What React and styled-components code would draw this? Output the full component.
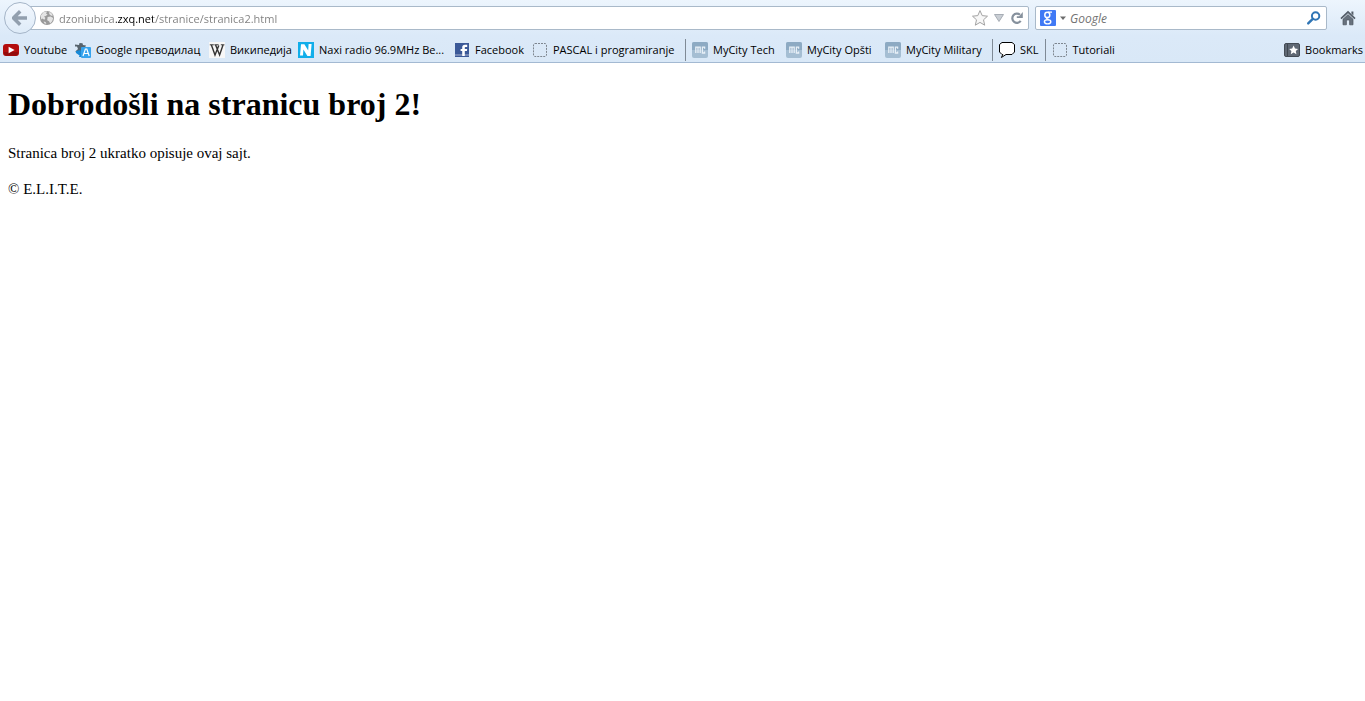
import React from "react";
import styled, { createGlobalStyle, css } from "styled-components";

const GlobalStyle = createGlobalStyle`
  *, *::before, *::after { box-sizing: border-box; }
  body { margin: 0; background: #fff; }
  button, input { font: inherit; }
`;

const uiFont = css`
  font-family: "Open Sans", "Noto Sans", sans-serif;
  font-size: 11px;
  line-height: 16px;
`;

const Chrome = styled.header`
  ${uiFont}
  color: #000;
  background: linear-gradient(#edf5fd 0, #dbe9f8 36px, #d9e8f7 100%);
  border-bottom: 1px solid #a3b9d2;
`;

const NavBar = styled.div`
  display: flex;
  align-items: center;
  height: 36px;
  padding: 0 9px 0 4px;
`;

const BackButton = styled.button`
  position: relative;
  z-index: 1;
  flex: none;
  display: grid;
  place-items: center;
  width: 32px;
  height: 32px;
  margin-right: -8px;
  padding: 0;
  border: 1px solid #a5b5c8;
  border-radius: 50%;
  background: linear-gradient(#f3f8fe, #deebf8);
`;

const Field = styled.form`
  display: flex;
  align-items: center;
  height: 24px;
  margin: 0;
  border: 1px solid #a9b9c9;
  border-radius: 2px;
  background: #fff;
`;

const AddressField = styled(Field)`
  flex: 1;
  min-width: 0;
  gap: 4px;
  padding: 0 3px 0 10px;
`;

const SearchField = styled(Field)`
  flex: none;
  width: 292px;
  margin: 0 13px 0 6px;
  padding: 0 4px;
`;

const TextInput = styled.input`
  flex: 1;
  min-width: 0;
  height: 20px;
  padding: 0;
  border: 0;
  outline: 0;
  background: transparent;
`;

const AddressInput = styled(TextInput)`
  color: transparent;
  caret-color: #000;
  background: linear-gradient(90deg, #7d7d7d 57px, #000 57px 94px, #7d7d7d 94px);
  -webkit-background-clip: text;
  background-clip: text;
`;

const SearchInput = styled(TextInput)`
  font-size: 12px;
  font-style: italic;
  &::placeholder { color: #737373; opacity: 1; }
`;

const IconButton = styled.button`
  flex: none;
  display: grid;
  place-items: center;
  width: ${(p) => p.$width || 16}px;
  height: 18px;
  padding: 0;
  border: 0;
  background: none;
`;

const BookmarksBar = styled.nav`
  display: flex;
  align-items: center;
  gap: 6px;
  height: 26px;
  padding: 2px 2px 0 3px;
`;

const Bookmark = styled.a`
  flex: none;
  display: flex;
  align-items: center;
  gap: 5px;
  min-width: ${(p) => p.$width}px;
  color: inherit;
  text-decoration: none;
  white-space: nowrap;
`;

const BookmarksMenu = styled.button`
  flex: none;
  display: flex;
  align-items: center;
  gap: 5px;
  margin-left: auto;
  padding: 0;
  border: 0;
  color: inherit;
  background: none;
`;

const Separator = styled.span`
  flex: none;
  width: 1px;
  height: 22px;
  background: #7f8a96;
`;

const Icon = styled.svg`
  flex: none;
  display: block;
  width: ${(p) => p.$size || 16}px;
  height: ${(p) => p.$size || 16}px;
`;

const Page = styled.main`
  padding: 0 8px;
  font-family: "Liberation Serif", "Times New Roman", serif;
  font-size: 15px;
  line-height: 20px;
  color: #000;
`;

const Title = styled.h1`
  margin: 0;
  padding: 22px 0 20px;
  font-size: 32px;
  line-height: 38px;
`;

const Paragraph = styled.p`
  margin: 0 0 16px;
`;

const BackIcon = () => (
  <Icon viewBox="0 0 16 16" aria-hidden="true">
    <path d="M8.2 1.2 1.5 8l6.7 6.8M2.2 8H15" fill="none" stroke="#929fae" strokeWidth="3.4" />
  </Icon>
);

const GlobeIcon = () => (
  <Icon viewBox="0 0 16 16" aria-hidden="true">
    <circle cx="8" cy="8" r="7" fill="#9a9a9a" />
    <path d="M2 5.2 4.6 2l3.6-.5L7 3.4l1.6 1L6.8 6 5 6.4 6.4 8l-1 1.7L3.2 8.6 2 9.4zM9.8 2.2l2.2.4 2 2.8-1.8.4-1.6-1.2zM8.6 7l3-.6L14.2 8l-1 3.2-2 2.4-1.2-2.4-1.8-1zM4.6 11.4l2 .6.8 2-2-.8z" fill="#e4e4e4" />
  </Icon>
);

const StarIcon = () => (
  <Icon $size={18} viewBox="0 0 18 18" aria-hidden="true">
    <path d="m9 1.6 2.2 5 5.3.6-4 3.6 1.2 5.4L9 13.4l-4.7 2.8 1.2-5.4-4-3.6 5.3-.6z" fill="#f7f7f7" stroke="#a3a3a3" strokeLinejoin="round" />
  </Icon>
);

const DropIcon = () => (
  <Icon $size={12} viewBox="0 0 12 12" aria-hidden="true">
    <path d="M1.5 2.5h9L6 9.5z" fill="#c9ced4" stroke="#a7adb5" />
  </Icon>
);

const ReloadIcon = () => (
  <Icon viewBox="0 0 16 16" aria-hidden="true">
    <path d="M11.7 10.9A4.6 4.6 0 1 1 11 4.8" fill="none" stroke="#86919d" strokeWidth="2.2" />
    <path d="M13.8 2v6H7.8V6.2h2.4z" fill="#86919d" />
  </Icon>
);

const GoogleIcon = () => (
  <Icon viewBox="0 0 16 16" aria-hidden="true">
    <rect width="16" height="16" rx="1" fill="#4079f5" />
    <g fill="none" stroke="#fff">
      <ellipse cx="7.3" cy="4.9" rx="2.5" ry="2.6" strokeWidth="1.5" />
      <path d="M8 2.2h4M8.8 7.4C5.4 8.4 6.6 9.1 8.6 9.7" strokeWidth="1.2" />
      <ellipse cx="7.6" cy="11.8" rx="3.2" ry="2.1" strokeWidth="1.4" />
    </g>
  </Icon>
);

const CaretIcon = () => (
  <Icon $size={8} viewBox="0 0 8 8" aria-hidden="true">
    <path d="M1 2.5h6L4 6z" fill="#6c6c6c" />
  </Icon>
);

const SearchIcon = () => (
  <Icon viewBox="0 0 16 16" aria-hidden="true">
    <circle cx="9.6" cy="6" r="3.7" fill="none" stroke="#2f75b5" strokeWidth="2" />
    <path d="m6.8 8.8-4.6 4.6" stroke="#2f75b5" strokeWidth="2.4" strokeLinecap="round" />
  </Icon>
);

const HomeIcon = () => (
  <Icon viewBox="0 0 16 16" aria-hidden="true">
    <path d="M8 .8 15.6 8l-1.2 1.2L8 3.3 1.6 9.2.4 8zM11.4 1.6h2v3.8l-2-1.9z" fill="#545d68" />
    <path d="m8 4.6 5 4.6v5.6H9.6V10H6.4v4.8H3V9.2z" fill="#68727e" stroke="#4b535d" strokeWidth=".7" />
  </Icon>
);

const YoutubeIcon = () => (
  <Icon viewBox="0 0 16 16" aria-hidden="true">
    <rect y="2" width="16" height="12" rx="3" fill="#b30d0d" />
    <path d="M1 10h14v1.5a2 2 0 0 1-2 2H3a2 2 0 0 1-2-2z" fill="#930b0b" />
    <path d="m5.6 4.8 6 3.2-6 3.2z" fill="#fff" />
  </Icon>
);

const TranslateIcon = () => (
  <Icon viewBox="0 0 16 16" aria-hidden="true">
    <path d="M0 2.5 4 3l.5-2 3 .2L8 3l3 .4-1 2.2-2 .2-1 2 2 2-1.5 1.5L4 9 1.2 11 .4 9.4 3 7 2 4.6H0z" fill="#56636d" />
    <path d="m1 9 4.5-1L7 15H4l.6-1.4L1 11z" fill="#1689d7" />
    <rect x="6" y="5" width="10" height="11" rx="1" fill="#36a3ed" />
    <path d="m8 14 2.4-7h1.4l2.4 7M9 11.5h4.2" fill="none" stroke="#fff" strokeWidth="1.2" />
  </Icon>
);

const WikipediaIcon = () => (
  <Icon viewBox="0 0 16 16" aria-hidden="true">
    <rect width="16" height="16" fill="#f7f7f7" />
    <path d="m2.4 3 3.6 10L9.8 3.4M6.6 3l4 10L14 3" fill="none" stroke="#333" strokeWidth="1.4" />
    <path d="M.8 2.8h4M5.4 2.8h4.2M11.8 2.8h3.6" stroke="#333" />
  </Icon>
);

const NaxiIcon = () => (
  <Icon viewBox="0 0 16 16" aria-hidden="true">
    <rect width="16" height="16" fill="#11aeea" />
    <path d="M2 13.6 3 2.2h3.4l3.8 6.4.4-6.6h3l-1 12H9.4L5.4 7.6 5 13.6z" fill="#fff" />
  </Icon>
);

const FacebookIcon = () => (
  <Icon viewBox="0 0 16 16" aria-hidden="true">
    <rect x="1" y="1" width="14" height="14" fill="#3b5998" />
    <path d="M1 12h14v2H1z" fill="#7386b4" />
    <path d="M8.2 14V9H6.6V7h1.6V5.6c0-2 1-2.8 2.8-2.8h2.2V5h-1.4c-.8 0-1 .3-1 1v1h2.4l-.3 2h-2.1v5z" fill="#fff" />
  </Icon>
);

const BlankIcon = () => (
  <Icon viewBox="0 0 16 16" aria-hidden="true">
    <rect x="1.5" y="1.5" width="13" height="13" rx="1.5" fill="none" stroke="#7e868f" strokeDasharray="2 1" />
  </Icon>
);

const MyCityIcon = () => (
  <Icon viewBox="0 0 16 16" aria-hidden="true">
    <rect width="16" height="16" rx="2" fill="#a5bed3" />
    <path d="M0 8h16V2a2 2 0 0 0-2-2H2a2 2 0 0 0-2 2z" fill="#8daac3" />
    <path d="M3.8 11V5.2h4.4V11M6 5.2V11M12.6 6.8V5.2h-2.2V11h2.2V9.4" fill="none" stroke="#e8f0f7" strokeWidth="1.3" />
  </Icon>
);

const SpeechIcon = () => (
  <Icon viewBox="0 0 16 16" aria-hidden="true">
    <path d="M3 .5h10l2.5 2V10L13 12.5H7l-4.6 3 1.4-3H3L.5 10V2.5z" fill="#fff" stroke="#000" />
  </Icon>
);

const BookmarksIcon = () => (
  <Icon viewBox="0 0 16 16" aria-hidden="true">
    <rect x=".5" y="1.5" width="15" height="13" rx="1.5" fill="#5f6874" stroke="#444c56" />
    <path d="M3.5 2v12" stroke="#3f4750" />
    <path d="m9.6 3.6 1.4 2.9 3.1.4-2.3 2.1.6 3.2-2.8-1.6-2.8 1.6.6-3.2-2.3-2.1 3.1-.4z" fill="#fff" />
  </Icon>
);

const bookmarks = [
  { label: "Youtube", icon: YoutubeIcon, width: 66 },
  { label: "Google преводилац", icon: TranslateIcon, width: 128 },
  { label: "Википедија", icon: WikipediaIcon, width: 83 },
  { label: "Naxi radio 96.9MHz Be...", icon: NaxiIcon, width: 150 },
  { label: "Facebook", icon: FacebookIcon, width: 72 },
  { label: "PASCAL i programiranje", icon: BlankIcon, width: 147 },
  null,
  { label: "MyCity Tech", icon: MyCityIcon, width: 88 },
  { label: "MyCity Opšti", icon: MyCityIcon, width: 93 },
  { label: "MyCity Military", icon: MyCityIcon, width: 101 },
  null,
  { label: "SKL", icon: SpeechIcon, width: 39 },
  null,
  { label: "Tutoriali", icon: BlankIcon, width: 66 },
];

export default function App() {
  return (
    <>
      <GlobalStyle />
      <Chrome>
        <NavBar>
          <BackButton type="button" aria-label="Back"><BackIcon /></BackButton>
          <AddressField onSubmit={(e) => e.preventDefault()}>
            <GlobeIcon />
            <AddressInput aria-label="Address" defaultValue="dzoniubica.zxq.net/stranice/stranica2.html" spellCheck={false} />
            <IconButton type="button" $width={18} aria-label="Bookmark this page"><StarIcon /></IconButton>
            <IconButton type="button" $width={12} aria-label="Show history"><DropIcon /></IconButton>
            <IconButton type="button" aria-label="Reload"><ReloadIcon /></IconButton>
          </AddressField>
          <SearchField role="search" onSubmit={(e) => e.preventDefault()}>
            <GoogleIcon />
            <IconButton type="button" $width={14} aria-label="Choose search engine"><CaretIcon /></IconButton>
            <SearchInput aria-label="Search" placeholder="Google" />
            <IconButton type="submit" aria-label="Search"><SearchIcon /></IconButton>
          </SearchField>
          <IconButton type="button" aria-label="Home"><HomeIcon /></IconButton>
        </NavBar>
        <BookmarksBar aria-label="Bookmarks toolbar">
          {bookmarks.map((item, i) =>
            item ? (
              <Bookmark key={i} href="#" $width={item.width}><item.icon />{item.label}</Bookmark>
            ) : (
              <Separator key={i} />
            )
          )}
          <BookmarksMenu type="button"><BookmarksIcon />Bookmarks</BookmarksMenu>
        </BookmarksBar>
      </Chrome>
      <Page>
        <Title>Dobrodošli na stranicu broj 2!</Title>
        <Paragraph>Stranica broj 2 ukratko opisuje ovaj sajt.</Paragraph>
        <Paragraph>© E.L.I.T.E.</Paragraph>
      </Page>
    </>
  );
}
